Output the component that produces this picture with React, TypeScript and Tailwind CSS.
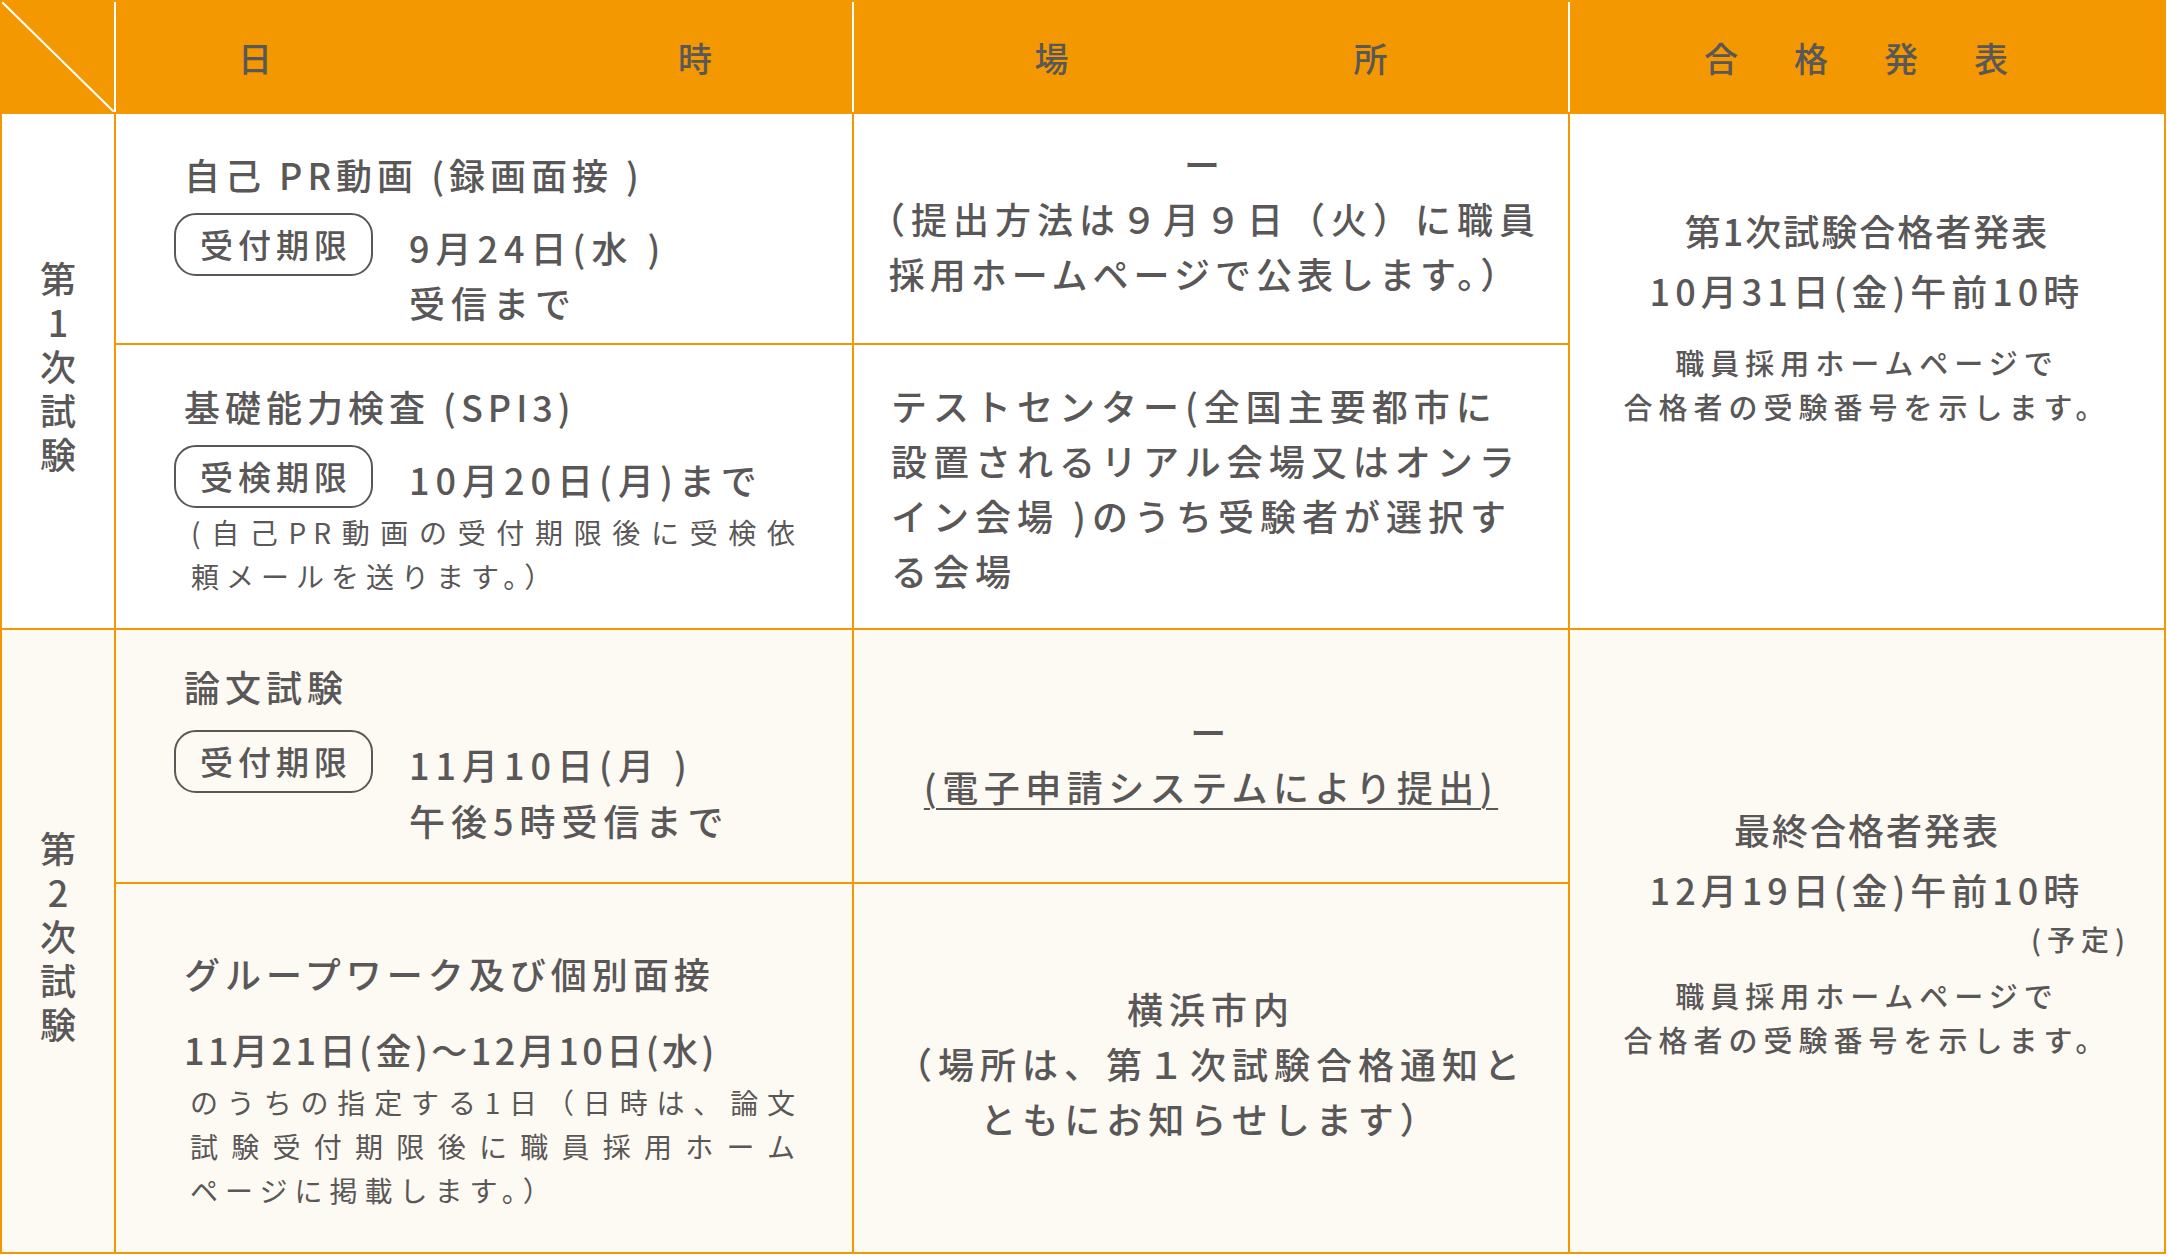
import type { ReactNode } from "react";

function Badge({ children }: { children: ReactNode }) {
  return (
    <div className="flex h-[63px] w-[199px] shrink-0 items-center justify-center rounded-[22px] border-2 border-[#595757] pl-[5px] text-[33px] font-medium tracking-[5px]">
      {children}
    </div>
  );
}

function SideLabel({ text, cream }: { text: string; cream?: boolean }) {
  return (
    <div className={`flex items-center justify-center ${cream ? "bg-[#FDF9F3]" : "bg-white"}`}>
      <p className="text-[36px] font-medium leading-[40px] tracking-[8px] [writing-mode:vertical-rl] [text-orientation:upright]">
        {text}
      </p>
    </div>
  );
}

export default function App() {
  return (
    <div className="h-[1256px] w-[2168px] bg-white font-['Noto_Sans_CJK_JP','Noto_Sans',sans-serif] text-[#595757]">
      <div className="grid h-[1254px] w-[2166px] grid-cols-[112px_736px_714px_594px] grid-rows-[110px_229px_283px_252px_368px] gap-[2px] border-2 border-[#F39800] bg-[#F39800]">
        {/* header */}
        <div className="col-span-4 col-start-1 row-start-1 grid grid-cols-[112px_736px_714px_594px] gap-x-[2px] bg-white text-[34px] font-medium">
          <div className="relative bg-[#F39800]">
            <svg className="absolute inset-0 h-full w-full" viewBox="0 0 112 110" preserveAspectRatio="none">
              <line x1="0" y1="0" x2="112" y2="110" stroke="white" strokeWidth="2" />
            </svg>
          </div>
          <div className="flex items-center justify-center gap-[406px] bg-[#F39800] pr-[18px]">
            <span>日</span>
            <span>時</span>
          </div>
          <div className="flex items-center justify-center gap-[285px] bg-[#F39800]">
            <span>場</span>
            <span>所</span>
          </div>
          <div className="flex items-center justify-center gap-[56px] bg-[#F39800] pr-[22px]">
            <span>合</span>
            <span>格</span>
            <span>発</span>
            <span>表</span>
          </div>
        </div>

        {/* 第1次試験 */}
        <div className="col-start-1 row-span-2 row-start-2 grid">
          <SideLabel text="第1次試験" />
        </div>

        <div className="col-start-2 row-start-2 bg-white pl-[58px] pt-[32px] font-medium">
          <p className="pl-[10px] text-[36px] leading-[56px] tracking-[5px]">自己 PR動画 (録画面接 )</p>
          <div className="mt-[11px] flex items-start gap-[36px]">
            <Badge>受付期限</Badge>
            <div className="mt-[7px] text-[36px] leading-[55px] tracking-[6px]">
              <p>9月24日(水 )</p>
              <p>受信まで</p>
            </div>
          </div>
        </div>

        <div className="col-start-3 row-start-2 flex flex-col items-center bg-white pr-[12px] pt-[22px] text-[36px] font-medium leading-[55px] tracking-[6px]">
          <p>ー</p>
          <p>（提出方法は９月９日（火）に職員</p>
          <p className="tracking-[5px]">採用ホームページで公表します。）</p>
        </div>

        <div className="col-start-4 row-span-2 row-start-2 flex flex-col items-center bg-white pt-[86px] font-medium">
          <p className="text-[36px] leading-[60px] tracking-[2px]">第1次試験合格者発表</p>
          <p className="text-[36px] leading-[60px] tracking-[5px]">10月31日(金)午前10時</p>
          <div className="mt-[20px] text-center text-[29px] leading-[44px] tracking-[6px]">
            <p>職員採用ホームページで</p>
            <p>合格者の受験番号を示します。</p>
          </div>
        </div>

        <div className="col-start-2 row-start-3 bg-white pl-[58px] pt-[33px]">
          <p className="pl-[10px] text-[36px] font-medium leading-[56px] tracking-[5px]">基礎能力検査 (SPI3)</p>
          <div className="mt-[11px] flex items-start gap-[36px] font-medium">
            <Badge>受検期限</Badge>
            <p className="mt-[7px] text-[36px] leading-[55px] tracking-[6px]">10月20日(月)まで</p>
          </div>
          <div className="ml-[17px] mt-[2px] text-[28px] leading-[44px] tracking-[7px]">
            <p className="w-[611px] [text-align-last:justify]">(自己PR動画の受付期限後に受検依</p>
            <p>頼メールを送ります。）</p>
          </div>
        </div>

        <div className="col-start-3 row-start-3 bg-white pl-[37px] pt-[33px] text-[36px] font-medium leading-[55px] tracking-[6px]">
          <p>テストセンター(全国主要都市に</p>
          <p>設置されるリアル会場又はオンラ</p>
          <p>イン会場 )のうち受験者が選択す</p>
          <p>る会場</p>
        </div>

        {/* 第2次試験 */}
        <div className="col-start-1 row-span-2 row-start-4 grid">
          <SideLabel text="第2次試験" cream />
        </div>

        <div className="col-start-2 row-start-4 bg-[#FDF9F3] pl-[58px] pt-[28px] font-medium">
          <p className="pl-[10px] text-[36px] leading-[56px] tracking-[5px]">論文試験</p>
          <div className="mt-[16px] flex items-start gap-[36px]">
            <Badge>受付期限</Badge>
            <div className="mt-[6px] text-[36px] leading-[56px] tracking-[6px]">
              <p>11月10日(月 )</p>
              <p>午後5時受信まで</p>
            </div>
          </div>
        </div>

        <div className="col-start-3 row-start-4 flex flex-col items-center bg-[#FDF9F3] pt-[74px] text-[36px] font-medium leading-[55px] tracking-[5.5px]">
          <p>ー</p>
          <p className="underline decoration-2 underline-offset-[6px]">(電子申請システムにより提出)</p>
        </div>

        <div className="col-start-4 row-span-2 row-start-4 flex flex-col items-center bg-[#FDF9F3] pt-[169px] font-medium">
          <p className="text-[36px] leading-[60px] tracking-[2px]">最終合格者発表</p>
          <p className="text-[36px] leading-[60px] tracking-[5px]">12月19日(金)午前10時</p>
          <p className="mr-[33px] self-end text-[28px] leading-[40px] tracking-[6px]">(予定)</p>
          <div className="mt-[14px] text-center text-[29px] leading-[44px] tracking-[6px]">
            <p>職員採用ホームページで</p>
            <p>合格者の受験番号を示します。</p>
          </div>
        </div>

        <div className="col-start-2 row-start-5 bg-[#FDF9F3] pl-[58px] pt-[61px]">
          <p className="pl-[10px] text-[36px] font-medium leading-[56px] tracking-[5px]">グループワーク及び個別面接</p>
          <p className="mt-[20px] pl-[10px] text-[36px] font-medium leading-[56px] tracking-[3.5px]">
            11月21日(金)〜12月10日(水)
          </p>
          <div className="ml-[16px] mt-[3px] text-[28px] leading-[44px] tracking-[7px]">
            <p className="w-[612px] [text-align-last:justify]">のうちの指定する1日（日時は、論文</p>
            <p className="w-[612px] [text-align-last:justify]">試験受付期限後に職員採用ホーム</p>
            <p>ページに掲載します。）</p>
          </div>
        </div>

        <div className="col-start-3 row-start-5 flex flex-col items-center bg-[#FDF9F3] pt-[97px] text-[36px] font-medium leading-[55px] tracking-[6px]">
          <p>横浜市内</p>
          <p>（場所は、第１次試験合格通知と</p>
          <p>ともにお知らせします）</p>
        </div>
      </div>
    </div>
  );
}
